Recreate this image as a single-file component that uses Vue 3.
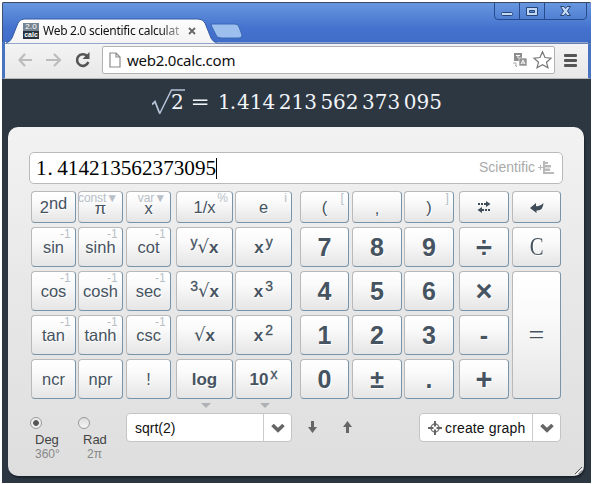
<script setup>
import { ref } from 'vue'

const angle = ref('deg')
const digits = ['414', '213', '562', '373', '095']

const keys = [
  [
    { t: '2', sup: 'nd', k: 'second' },
    { t: 'π', hint: 'const▼', k: 'low' },
    { t: 'x', hint: 'var▼', k: 'low' },
    { t: '1/x', hint: '%' },
    { t: 'e', hint: 'i' },
    { t: '(', hint: '[' },
    { t: ',', k: 'low' },
    { t: ')', hint: ']' },
    { icon: 'swap' },
    { icon: 'back' },
  ],
  [
    { t: 'sin', hint: '-1' },
    { t: 'sinh', hint: '-1' },
    { t: 'cot', hint: '-1' },
    { pre: 'y', root: true, t: 'x', k: 'bold' },
    { t: 'x', sup: 'y', k: 'bold' },
    { t: '7', k: 'num' },
    { t: '8', k: 'num' },
    { t: '9', k: 'num' },
    { t: '÷', k: 'num op' },
    { t: 'C', k: 'clear' },
  ],
  [
    { t: 'cos', hint: '-1' },
    { t: 'cosh', hint: '-1' },
    { t: 'sec', hint: '-1' },
    { pre: '3', root: true, t: 'x', k: 'bold' },
    { t: 'x', sup: '3', k: 'bold' },
    { t: '4', k: 'num' },
    { t: '5', k: 'num' },
    { t: '6', k: 'num' },
    { t: '×', k: 'num op' },
    { t: '=', k: 'equals' },
  ],
  [
    { t: 'tan', hint: '-1' },
    { t: 'tanh', hint: '-1' },
    { t: 'csc', hint: '-1' },
    { root: true, t: 'x', k: 'bold' },
    { t: 'x', sup: '2', k: 'bold' },
    { t: '1', k: 'num' },
    { t: '2', k: 'num' },
    { t: '3', k: 'num' },
    { t: '-', k: 'num' },
  ],
  [
    { t: 'ncr' },
    { t: 'npr' },
    { t: '!' },
    { t: 'log', k: 'bold', more: true },
    { t: '10', sup: 'x', k: 'bold', more: true },
    { t: '0', k: 'num' },
    { t: '±', k: 'num' },
    { t: '.', k: 'num' },
    { t: '+', k: 'num op' },
  ],
]
const flat = keys.flatMap((row) => row.map((key, i) => ({ ...key, col: i })))
</script>

<template>
  <div class="window">
    <header class="chrome">
      <svg class="frame" width="590" height="42" viewBox="0 0 590 42">
        <defs>
          <linearGradient id="tab" x1="0" y1="0" x2="0" y2="1">
            <stop offset="0" stop-color="#fdfdfd" />
            <stop offset="1" stop-color="#f3f3f3" />
          </linearGradient>
        </defs>
        <path d="M3 41 Q7 40 9 36 L15 21 Q17 17 21 17 H195 Q200 17 202 21 L208 36 Q210 40 214 41 H590 V42 H3Z" fill="url(#tab)" stroke="#345aa3" />
        <path d="M209 22 H232 Q235 22 236 25 L239 33 Q239 36 236 36 H218 Q214 36 213 33 L209 25 Q207 22 209 22Z" fill="#9dbfee" stroke="#3c68b6" />
        <g fill="none" stroke="#274a8d">
          <path d="M491.500 1 V14 Q491.500 17.500 495 17.500 H580 Q583.500 17.500 583.500 14 V1 M516.500 1 V17 M541.500 1 V17" />
        </g>
        <g stroke="#294678" fill="#c3d8f5">
          <rect x="498.500" y="10.500" width="11" height="3" rx="1" />
          <path d="M523.500 5.500 H534.500 V13.500 H523.500Z M526.500 8.500 V10.500 H531.500 V8.500Z" fill-rule="evenodd" />
          <path d="M557.500 4.500 H561 L562.500 6.500 L564 4.500 H567.500 L564.500 9 L567.500 13.500 H564 L562.500 11.500 L561 13.500 H557.500 L560.500 9Z" />
        </g>
      </svg>
      <div class="tab">
        <div class="favicon"><span>2.0</span><b>calc</b></div>
        <span class="title">Web 2.0 scientific calculat</span>
        <svg width="8" height="8" viewBox="0 0 8 8"><path d="M1 1 L7 7 M7 1 L1 7" stroke="#666" stroke-width="1.800" /></svg>
      </div>
    </header>

    <nav class="toolbar">
      <svg class="nav-icons" width="80" height="20" viewBox="0 0 80 20">
        <g fill="none" stroke="#bcbcbc" stroke-width="2.200">
          <path d="M13 10 H0 M6 4 L0.500 10 L6 16" />
          <path d="M27 10 H41 M35 4 L41 10 L35 16" />
        </g>
        <path d="M68 6 A5.800 5.800 0 1 0 69.300 12" fill="none" stroke="#555" stroke-width="2.600" />
        <path d="M70.500 2 V9 H63.500Z" fill="#555" />
      </svg>
      <div class="address">
        <svg width="12" height="16" viewBox="0 0 12 16"><path d="M1 1 H7 L11 5 V15 H1Z M7 1 V5 H11" fill="#fff" stroke="#8c8c8c" stroke-width="1.200" /></svg>
        <span class="url">web2.0calc.com</span>
        <svg class="tools" width="40" height="20" viewBox="0 0 40 20">
          <rect x="3" y="3" width="8" height="8" fill="#8d8d8d" />
          <path d="M5 5.500 H9 M7 5 V8" stroke="#fff" fill="none" />
          <rect x="8" y="8" width="8" height="8" fill="#929292" stroke="#fff" stroke-width=".6" />
          <path d="M10 14 L12 10 L14 14 M11 13 H13" stroke="#fff" fill="none" />
          <path d="M2 13 H5 V16 M4 15 L6 17" stroke="#aaa" fill="none" />
          <path d="M31.500 1.800 L34 7.500 L40 8.100 L35.500 12.300 L37 17.800 L31.500 14.800 L26 17.800 L27.500 12.300 L23 8.100 L29 7.500Z" fill="#fff" stroke="#777" stroke-width="1.200" />
        </svg>
      </div>
      <div class="menu"><i></i><i></i><i></i></div>
    </nav>

    <main class="page">
      <div class="result">
        <svg width="34" height="28" viewBox="0 0 34 28">
          <path d="M0 15.500 L3 12.500 L7.500 24" fill="none" stroke="#b5c3d8" stroke-width="1.800" />
          <path d="M7.500 25 L19.500 1 H33" fill="none" stroke="#b5c3d8" stroke-width="1.500" />
        </svg>
        <span class="radicand">2</span>
        <span class="eq">=</span>
        <span class="int">1.</span>
        <span v-for="d in digits" :key="d" class="dg">{{ d }}</span>
      </div>

      <section class="calc">
        <div class="entry">
          <span class="typed">1<span class="point">.</span>414213562373095</span>
          <i class="caret"></i>
          <span class="mode">Scientific</span>
          <svg width="16" height="14" viewBox="0 0 16 14">
            <path d="M0 6.500 H5 M2.500 4 V9" stroke="#bbb" />
            <path d="M5 0 H7 V13 H5Z M7 1 H10 V3 H7Z M7 4 H13 V6.500 H7Z M7 7.500 H12 V10 H7Z M7 11 H16 V13 H7Z" fill="#b9b9b9" />
          </svg>
        </div>

        <div class="keypad">
          <button v-for="(key, i) in flat" :key="i" type="button" :class="['key', 'c' + key.col, key.k]">
            <span v-if="key.hint" :class="['hint', { menuhint: key.hint.includes('▼') }]">{{ key.hint }}</span>
            <svg v-if="key.icon === 'swap'" width="14" height="13" viewBox="0 0 14 13">
              <path d="M1 3 H3 M4 3 H6 M7 3 H10 M4 9 H7 M8 9 H10 M11 9 H13" stroke="#3f4c59" stroke-width="1.900" />
              <path d="M9 0 L13.500 3 L9 6Z M5 6 L0.500 9 L5 12Z" fill="#3f4c59" />
            </svg>
            <svg v-else-if="key.icon === 'back'" class="back" width="14" height="12" viewBox="0 0 14 12">
              <path d="M0 7 L6 2 V5 Q10 6 13.500 2 Q13 10 6.500 9.500 V12Z" fill="#3f4c59" />
            </svg>
            <span v-else class="label"><sup v-if="key.pre">{{ key.pre }}</sup><span v-if="key.root" class="root">√</span>{{ key.t }}<sup v-if="key.sup">{{ key.sup }}</sup></span>
            <i v-if="key.more" class="more"></i>
          </button>
        </div>

        <footer class="bottom">
          <label class="angle">
            <i :class="['radio', { on: angle === 'deg' }]" @click="angle = 'deg'"></i>
            <span>Deg</span><small>360°</small>
          </label>
          <label class="angle rad">
            <i :class="['radio', { on: angle === 'rad' }]" @click="angle = 'rad'"></i>
            <span>Rad</span><small>2π</small>
          </label>
          <div class="combo history">
            <span>sqrt(2)</span>
            <div class="drop"><svg width="14" height="10" viewBox="0 0 14 10"><path d="M1.500 2 L7 7.300 L12.500 2" fill="none" stroke="#666" stroke-width="3.600" /></svg></div>
          </div>
          <svg class="arrows" width="45" height="12" viewBox="0 0 45 12">
            <path d="M3 0 H6 V6 H9 L4.500 12 L0 6 H3Z M38 12 H41 V6 H44 L39.500 0 L35 6 H38Z" fill="#666" />
          </svg>
          <div class="combo graph">
            <svg width="14" height="14" viewBox="0 0 14 14">
              <circle cx="7" cy="7" r="4" fill="none" stroke="#777" stroke-width="1.500" />
              <path d="M7 0 V5.500 M7 8.500 V14 M0 7 H5.500 M8.500 7 H14" stroke="#666" stroke-width="2" />
            </svg>
            <span>create graph</span>
            <div class="drop"><svg width="14" height="10" viewBox="0 0 14 10"><path d="M1.500 2 L7 7.300 L12.500 2" fill="none" stroke="#666" stroke-width="3.600" /></svg></div>
          </div>
        </footer>
        <svg class="grip" width="9" height="9" viewBox="0 0 9 9"><path d="M1 8 L8 1 M4.500 8 L8 4.500" stroke="#555" /><path d="M2 9 L9 2" stroke="#fff" /></svg>
      </section>
    </main>
  </div>
</template>

<style>
body { background: #fff; }
</style>

<style scoped>
* { box-sizing: border-box; }
svg { display: block; flex: none; }
.window {
  width: 589px; height: 481px; margin: 2px 0 0 2px; overflow: hidden;
  background: #2d3742; font-family: "Liberation Sans", Arial, sans-serif;
  border-radius: 2px 2px 0 0;
}
.chrome {
  position: relative; height: 40px; padding: 14px 0 0 21px;
  border-top: 1px solid #3d4a5e; border-left: 1px solid #3e516e;
  background: linear-gradient(#6797df, #4472ce 65%, #3f6dc8);
}
.frame { position: absolute; left: 0; top: -1px; }
.tab { position: relative; display: flex; align-items: center; height: 27px; width: 180px; }
.favicon { width: 16px; height: 16px; background: #26323d; color: #fff; font-size: 8px; line-height: 8px; overflow: hidden; margin-left: -1px; }
.favicon span, .favicon b { display: block; height: 8px; text-align: center; letter-spacing: .2px; }
.favicon span { background: #778593; }
.favicon b { font-size: 7px; line-height: 7px; letter-spacing: 0; }
.title {
  width: 137px; margin: 0 8px 0 4px; white-space: nowrap; font: 12px "Noto Sans", sans-serif; letter-spacing: -.28px;
  color: transparent; background: linear-gradient(90deg, #111 86%, #aaa 100%); background-clip: text;
}
.toolbar {
  display: flex; align-items: center; height: 37px; padding: 0 5px 0 15px;
  border-left: 3px solid #4773bf; border-right: 3px solid #4773bf;
  background: linear-gradient(#f4f4f4, #e8e8e8); border-bottom: 1px solid #b8b8b8;
}
.nav-icons { margin-left: -1px; overflow: visible; }
.address {
  display: flex; flex: none; align-items: center; width: 453px; height: 28px; margin-left: 3px; padding: 0 3px 0 6px;
  border: 1px solid #b2b2b2; border-radius: 2px; background: #fff;
}
.tools { overflow: visible; }
.url { flex: 1; margin-left: 6px; font: 15px "Noto Sans", sans-serif; letter-spacing: -.25px; color: #111; }
.menu { display: grid; gap: 2px; margin-left: 9px; }
.menu i { width: 13px; height: 3px; border-radius: 1px; background: #555; }
.page { height: 404px; padding: 0 6px; }
.result { display: flex; align-items: center; height: 48px; padding-left: 144px; color: #f1f4f8; font: 20px "DejaVu Serif", serif; }
.result > span { flex: none; line-height: 24px; margin-top: -3px; }
.result .radicand { margin-left: -15px; width: 14px; }
.result .eq { width: 20px; margin-left: 7px; transform: scaleX(1.150); }
.result .int { width: 19px; margin-left: 6px; letter-spacing: -1px; }
.dg { width: 41.700px; }
.calc {
  position: relative; width: 576px; height: 349px; padding: 25px 21px 0; border-radius: 10px;
  background: linear-gradient(#f2f2f2, #e8e8e8 45%, #dedede); box-shadow: 1px 2px 2px #19222b;
}
.entry {
  display: flex; align-items: center; height: 32px; padding: 0 8px 0 6px; border: 1px solid #b9b9b9;
  border-radius: 5px; background: #fff; width: 534px;
}
.typed { font: 21.200px "Liberation Serif", serif; color: #000; }
.point { display: inline-block; width: 10.600px; padding-left: 1px; }
.caret { width: 1px; height: 21px; background: #000; }
.mode { margin-left: auto; margin-right: 3px; margin-top: -2px; font-size: 14px; color: #aaa; }
.keypad {
  display: grid; margin: 7px 0 0 2px;
  grid-template-columns: 47px 48px 50px 59px 65px 52px 52px 55px 53px 49px;
  grid-template-rows: 32px repeat(4, 40px); row-gap: 4px;
}
.key {
  position: relative; display: flex; align-items: center; justify-content: center; padding: 0; margin: 0;
  font: 16.500px "Liberation Sans", Arial, sans-serif; color: #465361; white-space: nowrap;
  border: 1px solid #b9b9b9; border-right-color: #7894a9; border-bottom-color: #7894a9;
  border-radius: 4px; background: linear-gradient(#fff, #fafafa 35%, #e5e5e5);
  text-shadow: 1px 1px #fff;
}
.c0, .c3, .c6 { margin-right: 2px; }
.c1, .c5, .c8 { margin-right: 3px; }
.c2, .c7 { margin-right: 5px; }
.c4 { margin-right: 8px; }
.key sup { font: 14px "Liberation Sans", sans-serif; -webkit-text-stroke: .3px #465361; line-height: 0; vertical-align: 6px; }
.label sup:last-child { margin-left: 2px; }
.key.second sup { font: 16.500px "Liberation Sans", sans-serif; line-height: 0; -webkit-text-stroke: 0; vertical-align: 4px; margin: 0; }
.low .label { padding-top: 2px; }
.hint { position: absolute; right: 4px; top: 0; font-size: 12px; line-height: 13px; letter-spacing: .2px; color: #b7bfc7; text-shadow: none; }
.menuhint { letter-spacing: -.1px; }
.bold { font-weight: 700; font-size: 17px; }
.bold .label { padding-top: 1px; }
.root { font: 18px "DejaVu Sans", sans-serif; line-height: 0; }
.num { font-size: 25px; font-weight: 700; }
.op { font-size: 29px; }
.clear { font: 26px "Liberation Serif", serif; }
.clear .label { transform: scaleX(.8); }
.equals { grid-row: 3 / span 3; grid-column: 10; font: 28px "Liberation Serif", serif; }
.more { position: absolute; left: 24px; top: 43px; border: 5px solid transparent; border-top-color: #aeb2b6; border-bottom: 0; }
.bottom { display: flex; margin: 14px 0 0 1px; }
.angle { display: flex; flex-direction: column; width: 48px; line-height: 14px; font-size: 13px; color: #444; padding-top: 4px; }
.angle span { margin: 4px 0 0 5px; }
.angle small { margin-left: 5px; font-size: 12px; color: #888; }
.angle.rad small { margin-left: 9px; }
.radio { width: 12px; height: 12px; border: 1px solid #999; border-radius: 50%; background: linear-gradient(#ddd, #f5f5f5); }
.radio.on { background: radial-gradient(circle, #555 0 2.500px, #eee 3.200px); }
.combo { display: flex; align-items: center; height: 29px; border: 1px solid #c4c4c4; border-radius: 4px; background: #fff; font-size: 14px; color: #111; }
.history { width: 166px; padding-left: 8px; }
.drop { display: flex; align-items: center; justify-content: center; width: 28px; height: 100%; margin-left: auto; border-left: 1px solid #ccc; }
.arrows { margin: 8px 0 0 16px; }
.graph { width: 142px; margin-left: 66px; padding-left: 8px; }
.graph span { margin-left: 3px; white-space: nowrap; letter-spacing: .15px; }
.grip { position: absolute; right: 1px; bottom: 1px; }
</style>
